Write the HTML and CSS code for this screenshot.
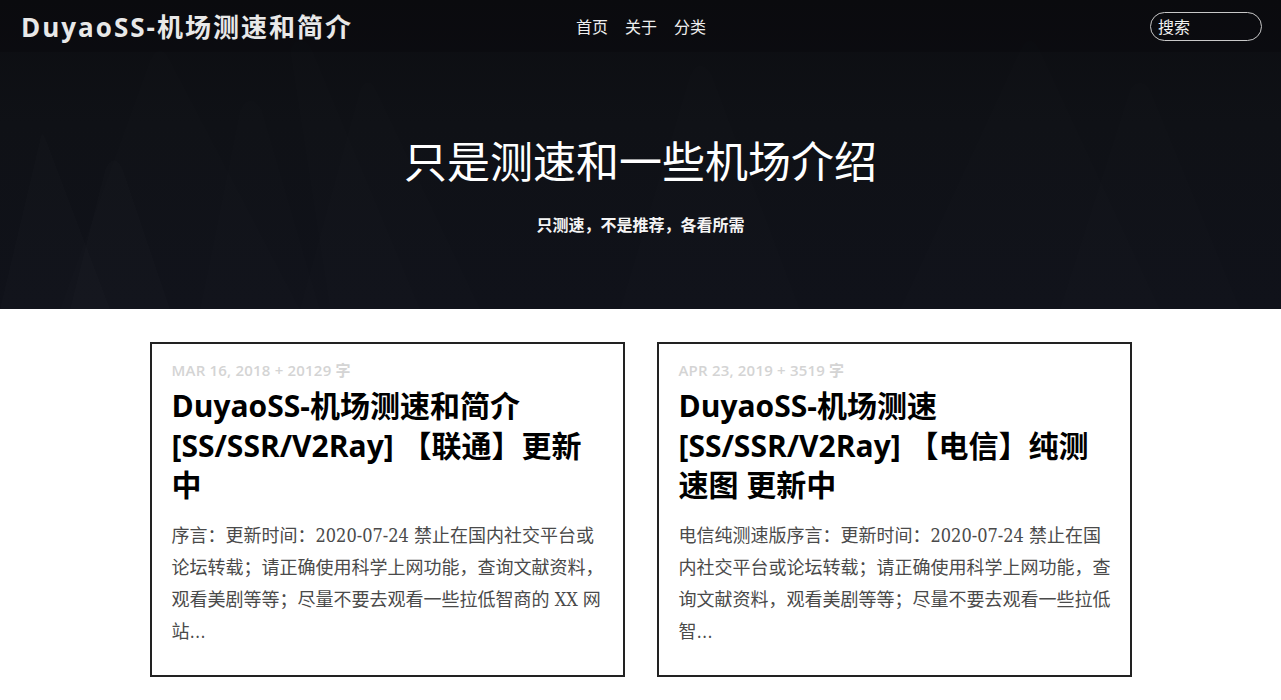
FILE: index.html
```html
<!DOCTYPE html>
<html lang="zh-CN">
<head>
<meta charset="utf-8">
<title>DuyaoSS-机场测速和简介</title>
<link rel="stylesheet" href="styles.css">
</head>
<body>
<header class="hero">
  <svg class="hero-bg" viewBox="0 0 1281 309" preserveAspectRatio="none" aria-hidden="true">
    <path d="M60 309 L150 60 Q160 40 170 60 L300 309 Z" fill="#ffffff" opacity="0.008"/>
    <path d="M0 309 L40 140 Q42 128 46 140 L110 309 Z" fill="#ffffff" opacity="0.01"/>
    <path d="M70 309 L105 170 Q114 150 123 170 L170 309 Z" fill="#ffffff" opacity="0.012"/>
    <path d="M330 309 L290 50 Q300 30 312 50 L420 309 Z" fill="#ffffff" opacity="0.006"/>
    <path d="M620 309 L690 75 Q700 55 712 75 L800 309 Z" fill="#ffffff" opacity="0.007"/>
    <path d="M300 309 L360 90 Q368 75 376 90 L480 309 Z" fill="#ffffff" opacity="0.007"/>
    <path d="M200 309 L240 110 Q250 90 262 110 L320 309 Z" fill="#ffffff" opacity="0.008"/>
    <path d="M900 309 L1020 50 Q1030 30 1040 50 L1160 309 Z" fill="#ffffff" opacity="0.006"/>
    <path d="M1060 309 L1130 90 Q1140 75 1150 90 L1240 309 Z" fill="#ffffff" opacity="0.006"/>
  </svg>
  <nav class="topbar">
    <a class="brand" href="#">DuyaoSS-机场测速和简介</a>
    <ul class="menu">
      <li><a href="#">首页</a></li>
      <li><a href="#">关于</a></li>
      <li><a href="#">分类</a></li>
    </ul>
    <input class="search" type="text" placeholder="搜索">
  </nav>
  <div class="hero-text">
    <h1 class="hero-title">只是测速和一些机场介绍</h1>
    <p class="hero-sub">只测速，不是推荐，各看所需</p>
  </div>
</header>
<main class="posts">
  <article class="card">
    <div class="meta">MAR 16, 2018 + 20129 字</div>
    <h2 class="title">DuyaoSS-机场测速和简介 [SS/SSR/V2Ray] 【联通】更新中</h2>
    <p class="excerpt">序言：更新时间：2020-07-24 禁止在国内社交平台或论坛转载；请正确使用科学上网功能，查询文献资料，观看美剧等等；尽量不要去观看一些拉低智商的 XX 网站…</p>
  </article>
  <article class="card">
    <div class="meta">APR 23, 2019 + 3519 字</div>
    <h2 class="title">DuyaoSS-机场测速 [SS/SSR/V2Ray] 【电信】纯测速图 更新中</h2>
    <p class="excerpt">电信纯测速版序言：更新时间：2020-07-24 禁止在国内社交平台或论坛转载；请正确使用科学上网功能，查询文献资料，观看美剧等等；尽量不要去观看一些拉低智…</p>
  </article>
</main>
</body>
</html>
```
FILE: styles.css
```css
* { box-sizing: border-box; }
html, body { margin: 0; padding: 0; }
body {
  background: #fff;
  font-family: "Open Sans", "Noto Sans CJK SC", sans-serif;
  color: #222;
}
a { color: inherit; text-decoration: none; }

.hero {
  position: relative;
  height: 309px;
  background: linear-gradient(180deg, #0c0d11 0%, #0f1116 40%, #10121a 100%);
  overflow: hidden;
}
.hero-bg {
  position: absolute;
  left: 0; top: 0;
  width: 100%; height: 100%;
}
.topbar {
  position: relative;
  height: 52px;
  display: flex;
  align-items: center;
  padding: 0 19px 0 21px;
  background: rgba(0,0,0,0.15);
}
.brand {
  font-family: "Open Sans", "Noto Sans CJK SC", sans-serif;
  font-weight: 700;
  font-size: 26px;
  letter-spacing: 2px;
  color: #e8e8e8;
  width: 460px;
  flex: none;
}
.menu {
  list-style: none;
  margin: 0 0 0 95px;
  padding: 0;
  display: flex;
  gap: 17px;
  flex: 1;
}
.menu a {
  font-family: "Noto Sans CJK SC", sans-serif;
  font-size: 16px;
  color: #eee;
}
.search {
  width: 112px;
  height: 29px;
  border: 1px solid #c8c8c8;
  border-radius: 15px;
  background: transparent;
  color: #fff;
  font-family: "Noto Sans CJK SC", sans-serif;
  font-size: 16px;
  padding: 0 7px;
  outline: none;
}
.search::placeholder { color: #f2f2f2; }

.hero-text {
  position: relative;
  text-align: center;
  padding-top: 75px;
}
.hero-title {
  margin: 0;
  font-family: "Noto Sans CJK SC", sans-serif;
  font-weight: 400;
  font-size: 43px;
  line-height: 64px;
  color: #fff;
}
.hero-sub {
  margin: 21px 0 0;
  font-family: "Liberation Serif", "Noto Sans CJK SC", serif;
  font-weight: 700;
  font-size: 16px;
  color: #f4f4f4;
}

.posts {
  width: 982px;
  margin: 33px auto 0;
  display: grid;
  grid-template-columns: 1fr 1fr;
  gap: 32px;
}
.card {
  border: 2px solid #222;
  padding: 15px 17px 27px 20px;
}
.meta {
  font-size: 15px;
  font-weight: 600;
  letter-spacing: 0.2px;
  color: #d4d4d4;
  line-height: 22px;
}
.title {
  margin: 5px 0 15px;
  font-family: "Open Sans", "Noto Sans CJK SC", sans-serif;
  font-weight: 700;
  font-size: 30px;
  line-height: 39.5px;
  color: #000;
}
.excerpt {
  margin: 0;
  font-family: "DejaVu Serif Condensed", "Noto Sans CJK SC", serif;
  font-size: 18px;
  line-height: 32px;
  color: #4a4a4a;
}
```
